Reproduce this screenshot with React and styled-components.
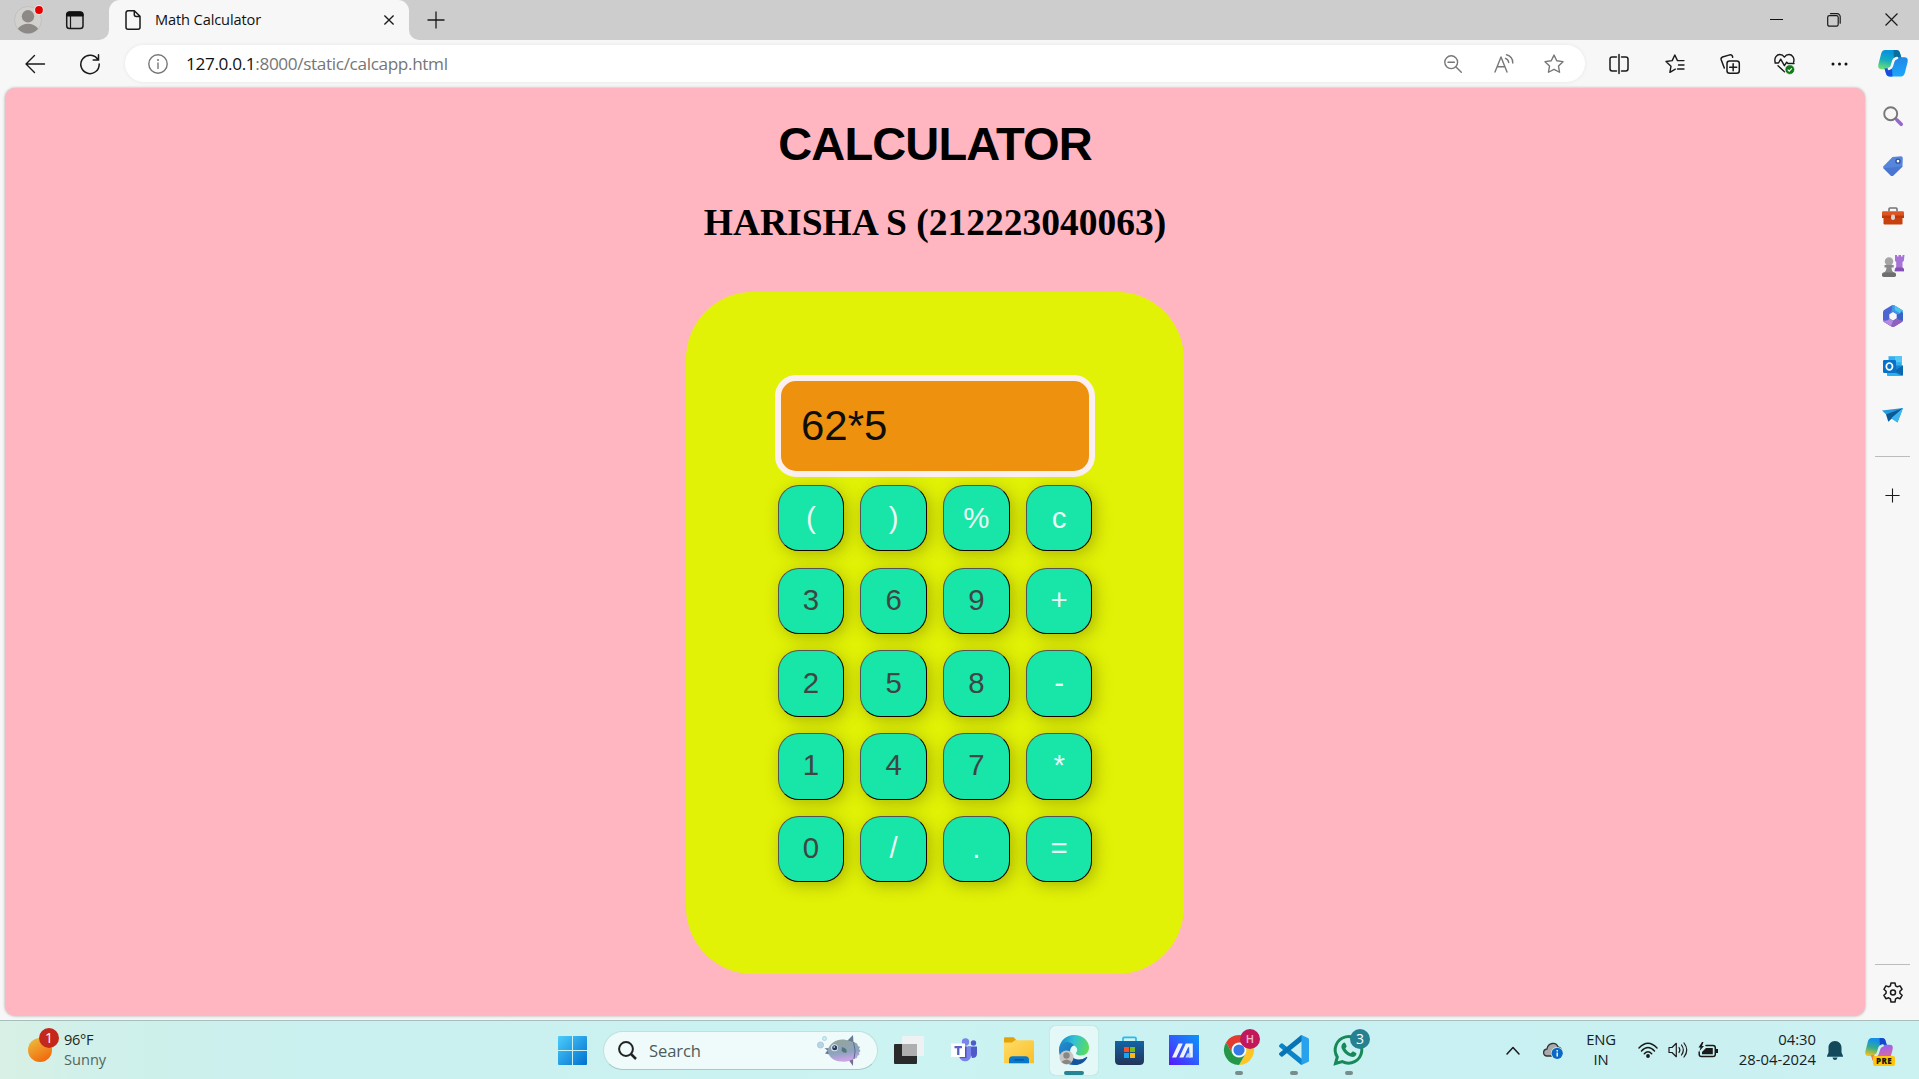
import React from "react";
import styled, { createGlobalStyle } from "styled-components";

const UI_FONT = '"Open Sans", "Noto Sans", sans-serif';

const GlobalStyle = createGlobalStyle`
  *, *::before, *::after { box-sizing: border-box; }
  body { margin: 0; overflow: hidden; background: #f7f7f7; font-family: ${UI_FONT}; }
  button, input { font: inherit; padding: 0; margin: 0; }
`;

const Screen = styled.div`
  display: flex;
  flex-direction: column;
  width: 1919px;
  height: 1079px;
  background: #f7f7f7;
`;

const Glyph = styled.svg`
  display: block;
  flex: none;
  width: ${(p) => p.$w || 20}px;
  height: ${(p) => p.$h || p.$w || 20}px;
  fill: none;
  overflow: visible;
`;

const Cell = styled.div`
  position: relative;
  display: flex;
  flex: none;
  align-items: center;
  justify-content: center;
  width: ${(p) => p.$w}px;
  height: ${(p) => (p.$h ? `${p.$h}px` : "100%")};
`;

/* ---------- Tab strip ---------- */

const TabStrip = styled.header`
  display: flex;
  height: 40px;
  flex: none;
`;

const StripStart = styled.div`
  display: flex;
  align-items: flex-start;
  width: 109px;
  padding: 6px 0 0 14px;
  gap: 23px;
  background: #cdcdcd;
  border-bottom-right-radius: 10px;
`;

const TabHolder = styled.div`
  width: 300px;
  background: #cdcdcd;
`;

const Tab = styled.div`
  display: flex;
  align-items: center;
  height: 40px;
  padding: 0 15px 1px 16px;
  background: #f7f7f7;
  border-radius: 11px 11px 0 0;
`;

const TabTitle = styled.span`
  flex: 1;
  margin-left: 14px;
  padding-bottom: 1px;
  font-size: 14.6px;
  line-height: 20px;
  letter-spacing: -0.12px;
  color: #111;
`;

const StripRest = styled.div`
  display: flex;
  flex: 1;
  justify-content: space-between;
  padding: 0 0 1px 13px;
  background: #cdcdcd;
  border-bottom-left-radius: 10px;
`;

const WindowControls = styled.div`
  display: flex;
`;

/* ---------- Toolbar ---------- */

const Toolbar = styled.nav`
  display: flex;
  align-items: center;
  flex: none;
  height: 48px;
  padding: 0 0 1px 7px;
`;

const AddressBar = styled.div`
  display: flex;
  align-items: center;
  width: 1460px;
  height: 37px;
  margin: 0 6px 0 8px;
  padding: 0 6px 0 22.5px;
  background: #fff;
  border-radius: 19px;
  box-shadow: 0 0 4px rgba(0, 0, 0, 0.07);
`;

const Url = styled.span`
  flex: 1;
  margin-left: 18.5px;
  padding-bottom: 1px;
  font-size: 17.2px;
  letter-spacing: -0.36px;
  color: #767676;
`;

const Host = styled.span`
  color: #111;
`;

/* ---------- Browser body ---------- */

const Body = styled.div`
  display: flex;
  flex: none;
  height: 932px;
  padding-left: 5px;
`;

const Page = styled.main`
  display: flex;
  flex-direction: column;
  align-items: center;
  width: 1860px;
  height: 928px;
  background: #ffb6c1;
  border-radius: 10px;
  box-shadow: 0 0 3px rgba(0, 0, 0, 0.32);
`;

const Title = styled.h1`
  margin: 29px 0 0;
  font: bold 47px/54px "Liberation Sans", Arial, sans-serif;
  letter-spacing: -0.85px;
  color: #000;
`;

const Student = styled.h2`
  margin: 30px 0 0;
  font: bold 37.5px/44px "Liberation Serif", "Times New Roman", serif;
  color: #000;
`;

const Calculator = styled.section`
  display: flex;
  flex-direction: column;
  align-items: center;
  width: 498px;
  height: 682px;
  margin-top: 47px;
  padding-top: 83px;
  background: #e1f206;
  border-radius: 67px;
`;

const Display = styled.output`
  display: flex;
  align-items: center;
  width: 320px;
  height: 102px;
  padding: 0 20px;
  color: #0e0e0a;
  background: #ee910f;
  border: 6px solid #fceff0;
  border-radius: 21px;
  font: 42px/48px "Liberation Sans", Arial, sans-serif;
`;

const Keypad = styled.div`
  display: grid;
  grid-template-columns: repeat(4, 66.4px);
  grid-auto-rows: 66.4px;
  gap: 16.35px;
  margin-top: 8px;
`;

const Key = styled.button`
  display: flex;
  align-items: center;
  justify-content: center;
  padding-bottom: ${(p) => (p.$first ? 0 : 2)}px;
  color: ${(p) => (p.$digit ? "#3e4542" : "#eaf6f2")};
  background: #18e5a8;
  border: 1px outset #000;
  border-radius: 20.8px;
  box-shadow: 3.3px 3.3px 16px rgba(92, 92, 0, 0.4);
  font: 29.4px/34px "Liberation Sans", Arial, sans-serif;
`;

const Sidebar = styled.aside`
  display: flex;
  flex-direction: column;
  align-items: center;
  width: 54px;
  padding: 2.5px 0 0 1px;
`;

const Rule = styled.div`
  flex: none;
  width: 35px;
  height: 1px;
  background: #bcbcbc;
  margin: ${(p) => p.$m || 0};
`;

const Spacer = styled.div`
  flex: 1;
`;

/* ---------- Taskbar ---------- */

const Taskbar = styled.footer`
  display: flex;
  align-items: center;
  flex: none;
  height: 59px;
  border-top: 1px solid #a6bfbd;
  background: linear-gradient(90deg, #d9f0e5 0, #d0f0ea 90px, #caf0ef 300px, #cbf3f1 900px, #c9f0f2 1450px, #cbf1f1 100%);
`;

const Weather = styled.div`
  display: flex;
  width: 548px;
  height: 58px;
  padding-left: 28px;
`;

const WeatherText = styled.div`
  display: flex;
  flex-direction: column;
  margin: 8px 0 0 3px;
  font-size: 14.6px;
  line-height: 20px;
  letter-spacing: -0.35px;
  color: #1b2624;
`;

const Muted = styled.span`
  color: #53655f;
  letter-spacing: 0;
`;

const SearchBox = styled.div`
  display: flex;
  align-items: center;
  width: 275px;
  height: 39px;
  margin: 0 7px 0 6px;
  padding: 0 16px 0 14px;
  background: #effbfb;
  border: 1px solid #bfe0de;
  border-bottom-color: #a3c9c8;
  border-radius: 20px;
`;

const SearchLabel = styled.span`
  flex: 1;
  margin-left: 12px;
  font-size: 16.6px;
  letter-spacing: -0.1px;
  color: #4c5c5b;
`;

const Apps = styled.div`
  display: flex;
  gap: 7px;
`;

const AppSlot = styled.div`
  position: relative;
  display: flex;
  align-items: center;
  justify-content: center;
  width: 48px;
  height: 49px;
  border-radius: 5px;
  background: ${(p) => (p.$active ? "#e5f8f8" : "transparent")};
  box-shadow: ${(p) => (p.$active ? "0 0 1px rgba(80,130,130,.5)" : "none")};
`;

const Indicator = styled.i`
  position: absolute;
  bottom: 0;
  left: 50%;
  width: ${(p) => (p.$active ? 20 : 8)}px;
  height: 4px;
  border-radius: 2px;
  transform: translateX(-50%);
  background: ${(p) => (p.$active ? "#258493" : "#778d8c")};
`;

const Badge = styled.b`
  position: absolute;
  top: ${(p) => p.$top}px;
  right: ${(p) => p.$right}px;
  width: 20px;
  height: 20px;
  border-radius: 50%;
  background: ${(p) => p.$bg};
  color: ${(p) => p.$fg || "#fff"};
  font: ${(p) => p.$weight || 500} ${(p) => p.$size || 14}px/20px ${UI_FONT};
  text-align: center;
`;

const Tray = styled.div`
  display: flex;
  align-items: center;
  height: 58px;
  margin-left: auto;
  padding-right: 16px;
`;

const TrayText = styled.div`
  width: ${(p) => p.$w}px;
  padding-bottom: 2px;
  text-align: ${(p) => p.$align};
  font-size: 14.8px;
  line-height: 20px;
  letter-spacing: ${(p) => p.$track}px;
  color: #17211f;
`;

/* ---------- Drawings ---------- */

const line = { stroke: "#1a1a1a", strokeWidth: 1.5, strokeLinecap: "round", strokeLinejoin: "round" };
const soft = { ...line, stroke: "#777", strokeWidth: 1.4 };

const Avatar = () => (
  <Glyph $w={28} viewBox="0 0 28 28">
    <circle cx="14" cy="14" r="13.5" fill="#d3d1ce" stroke="#bfbdba" strokeWidth=".8" />
    <circle cx="14" cy="10.3" r="6.2" fill="#8d8986" />
    <path d="M3.800 22.800C6.500 19 10 17.700 14 17.700s7.500 1.300 10.200 5.100A13.500 13.500 0 0 1 3.800 22.800Z" fill="#8d8986" />
    <circle cx="25" cy="4" r="4.900" fill="#e8e5e3" />
    <circle cx="25" cy="4" r="3.900" fill="#e80000" />
  </Glyph>
);

const TabActions = () => (
  <Glyph $w={20} $h={29} viewBox="0 0 20 29">
    <rect x="1.700" y="6" width="16.300" height="16.500" rx="2.800" {...line} />
    <path d="M1.700 10V8.500Q1.700 6 4.500 6h10.500q3 0 3 2.500V10Z" fill="#111" stroke="#111" />
    <path d="M5.500 10v12" {...line} strokeWidth="1.200" />
  </Glyph>
);

const PageIcon = () => (
  <Glyph $w={16} $h={20} viewBox="0 0 16 20">
    <path d="M3 .8h6.300L15 6.300v10.900a2 2 0 0 1-2 2H3a2 2 0 0 1-2-2V2.800a2 2 0 0 1 2-2ZM9.300.8v3.700a2 2 0 0 0 2 2H15" {...line} />
  </Glyph>
);

const Cross = ({ s = 10, w = 1.6 }) => (
  <Glyph $w={s} viewBox="0 0 12 12">
    <path d="M.5.5l11 11M11.500.5l-11 11" {...line} strokeWidth={w} strokeLinecap="butt" />
  </Glyph>
);

const Plus = ({ s }) => (
  <Glyph $w={s} viewBox="0 0 18 18">
    <path d="M9 .5v17M.5 9h17" {...line} strokeLinecap="butt" strokeWidth="1.300" />
  </Glyph>
);

const Restore = () => (
  <Glyph $w={14} viewBox="0 0 14 14">
    <rect x=".7" y="2.700" width="10.500" height="10.500" rx="1.700" {...line} strokeWidth="1.200" />
    <path d="M3.500.7h6.700a3 3 0 0 1 3 3v6.500" {...line} strokeWidth="1.200" />
  </Glyph>
);

const Back = () => (
  <Glyph viewBox="0 0 20 20">
    <path d="M9.500 1.500 1 10l8.500 8.500M1 10h18.500" {...line} strokeWidth="1.400" />
  </Glyph>
);

const Refresh = () => (
  <Glyph viewBox="0 0 20 20">
    <path d="M18.100 6A9.200 9.200 0 1 0 19.200 10M18.500.8V6h-5.300" {...line} strokeLinejoin="miter" />
  </Glyph>
);

const Info = () => (
  <Glyph viewBox="0 0 20 20">
    <circle cx="10" cy="10" r="9.200" {...soft} />
    <path d="M10 9v5.500" {...soft} />
    <circle cx="10" cy="6" r="1" fill="#777" />
  </Glyph>
);

const ZoomOut = () => (
  <Glyph $w={18} viewBox="0 0 18 18">
    <circle cx="7.200" cy="7.200" r="6.400" {...soft} />
    <path d="M4 7.200h6.400M12 12l5.300 5.300" {...soft} />
  </Glyph>
);

const ReadAloud = () => (
  <Glyph viewBox="0 0 20 20">
    <path d="M1 18 7 3l6 15M3.300 12.700h7.500M11.500 4.300a5 5 0 0 1 3.200 4.200M12.500.8A8.500 8.500 0 0 1 18.800 9" {...soft} />
  </Glyph>
);

const starPath = "M10 1.100l2.750 5.650 6.250.9-4.500 4.400 1.050 6.200L10 15.300l-5.550 2.950 1.050-6.200L1 7.650l6.250-.9Z";

const Star = () => (
  <Glyph viewBox="0 0 20 20">
    <path d={starPath} {...soft} />
  </Glyph>
);

const Split = () => (
  <Glyph viewBox="0 0 20 20">
    <path d="M7.500 3H3.200Q1 3 1 5.200v9.600Q1 17 3.200 17h4.300M12.500 3h4.300Q19 3 19 5.200v9.600q0 2.200-2.200 2.200h-4.300M10 .5v19" {...line} />
  </Glyph>
);

const Favorites = () => (
  <Glyph viewBox="0 0 20 20">
    <path d="M10.300 15.200 4.900 18.300l1.100-6.100L1 7.500l6.200-.9L9.800 1l2.700 5.600H19M13.500 11H19M12.500 15H19" {...line} strokeWidth="1.400" />
  </Glyph>
);

const Collections = () => (
  <Glyph viewBox="0 0 20 20">
    <rect x="7" y="7" width="12.300" height="12.300" rx="2.500" {...line} />
    <path d="M13.150 9.700v7M9.700 13.150h7M4.300 14 1.200 5.800Q.6 3.800 2.500 3L9.700.9q2-.5 2.700 1.200l.3 1.100" {...line} />
  </Glyph>
);

const Essentials = () => (
  <Glyph $w={21} viewBox="0 0 21 21">
    <path d="M1.200 9.200C-.2 4.500 3 1.500 5.800 1.500c2.200 0 3.700 1.200 4.600 2.600.9-1.400 2.400-2.600 4.600-2.600 2.800 0 6 3 4.600 7.700M1 10h3.500l2.200-3.800 3.700 6.500 2.300-3.500 1.300 1.300h6M4 12.800l6.500 6" {...line} strokeWidth="1.400" />
    <circle cx="15.800" cy="16.600" r="4.800" fill="#117a16" stroke="#f7f7f7" strokeWidth=".7" />
    <path d="m13.700 16.700 1.500 1.500 2.600-2.900" stroke="#fff" strokeWidth="1.100" />
  </Glyph>
);

const Dots = () => (
  <Glyph $w={17} $h={4} viewBox="0 0 17 4">
    {[2, 8.5, 15].map((x) => <circle key={x} cx={x} cy="2" r="1.500" fill="#111" />)}
  </Glyph>
);

const RIBBON = "M7 0H18.300q2.900 0 3.700 3l1.500 5H20q-3.700 0-4.800 3.600L13.300 16.300q-1 3-4.300 3H3.600Q-.6 19.300.3 14.500L3 4Q4 0 7 0Z";

const Copilot = ({ id, w, colors, gap }) => (
  <Glyph $w={w} $h={w * 0.88} viewBox="0 0 30 26.500">
    <defs>
      <linearGradient id={`${id}a`} x1=".5" y1="0" x2=".25" y2="1">
        <stop stopColor={colors[0]} offset=".15" /><stop offset=".55" stopColor={colors[1]} /><stop offset="1" stopColor={colors[2]} />
      </linearGradient>
      <linearGradient id={`${id}b`} x1=".3" y1="0" x2=".5" y2="1">
        <stop stopColor={colors[4]} /><stop offset="1" stopColor={colors[3]} />
      </linearGradient>
    </defs>
    <path d={RIBBON} fill={`url(#${id}a)`} />
    <path d="M15.500 0h2.800q2.900 0 3.700 3l1.500 5H20q-2.500 0-3.900 1.800Z" fill={colors[5]} />
    <g transform="rotate(180 15 13.250)">
      <path d={RIBBON} fill={`url(#${id}b)`} />
      <path d="M15.500 0h2.800q2.900 0 3.700 3l1.500 5H20q-2.500 0-3.900 1.800Z" fill={colors[6]} />
    </g>
    <path d="M19 8q-2.800.4-3.700 3.200l-1.600 5.200q-.7 2-2.700 2.500" stroke={gap} strokeWidth="2.600" strokeLinecap="round" />
  </Glyph>
);

const SideSearch = () => (
  <Glyph viewBox="0 0 20 20">
    <circle cx="7.700" cy="7.700" r="6.500" stroke="#777" strokeWidth="1.900" />
    <path d="m12.200 12.200 2 2" stroke="#777" strokeWidth="2" />
    <path d="m14.200 14.200 4 4" stroke="#9866cf" strokeWidth="3.700" strokeLinecap="round" />
  </Glyph>
);

const Tag = () => (
  <Glyph viewBox="0 0 20 20">
    <path d="M9.500 1 18 .2q1.700 0 1.800 1.800l-.3 8.500L10 19.700q-1 .7-2 0L.5 12.200q-.8-1 0-2Z" fill="#5685dc" />
    <path d="m.5 12.200 7.500 7.500q1 .7 2 0l9.500-9.200Z" fill="#4a75d0" />
    <circle cx="15" cy="5.200" r="2" fill="#fff" stroke="#304f9e" strokeWidth="1.300" />
  </Glyph>
);

const Toolbox = () => (
  <Glyph $w={22} $h={18} viewBox="0 0 22 18">
    <path d="M7 4.500V2q0-1 1-1h6q1 0 1 1v2.500" stroke="#747474" strokeWidth="1.600" />
    <path d="M0 5.500Q0 4.300 1.200 4.300h19.600q1.200 0 1.200 1.200v5H0Z" fill="#df5522" />
    <path d="M1.500 9.500h19v6.800q0 1.200-1.200 1.200H2.700q-1.200 0-1.200-1.200Z" fill="#c8400f" />
    <path d="M0 8.500h22V11H0Z" fill="#bc3908" />
    <rect x="9" y="7.500" width="4" height="5.500" rx="2" fill="#d9d4d0" />
  </Glyph>
);

const Games = () => (
  <Glyph $w={22} viewBox="0 0 22 22">
    <path d="M13 0h2v1.500h1.500V0H19v1.500h1.500V0h2l-.7 6-1.300 1v5.500l1.500 1.500v2.300h-9.300V14l1.500-1.500V7L13 6Z" fill="#a873d8" />
    <path d="M13.700 12.500h6.800L22 14v2.300h-9.300Z" fill="#8350b6" />
    <circle cx="7" cy="6.500" r="4.200" fill="#a5a5a5" />
    <path d="M2.500 10h9.200v2.500H9.500q0 4 3 5.500h-11q3-2 3-5.500h-2Z" fill="#898989" />
    <rect y="17.500" width="14" height="4.500" rx="1.700" fill="#6f6f6f" />
  </Glyph>
);

const M365 = () => (
  <Glyph $w={20} $h={22} viewBox="0 0 20 22">
    <path d="M8.500.6q1.500-.9 3 0L18.500 4.700Q20 5.600 20 7.300v7.400q0 1.700-1.500 2.600l-7 4.100q-1.500.9-3 0l-7-4.100Q0 16.400 0 14.700V7.300q0-1.700 1.500-2.600Z" fill="#4b66d3" />
    <path d="M8.500.6q1.500-.9 3 0L18.500 4.700Q20 5.600 20 7.300v7.400L14 12V9l-4-2.500-3 1.700Q10.500 4.500 8.500.6Z" fill="#3a9be6" />
    <path d="M11.500.6 18.500 4.700Q20 5.600 20 7.300v3L12 5Z" fill="#4fc4ee" />
    <path d="M20 14.700q0 1.700-1.500 2.600l-7 4.100q-1.500.9-3 0l-7-4.100Q.3 16.500.1 15.300q4 1.500 6.400-1.500L10 16l4-2.500V9Q20 9 20 14.700Z" fill="#8f62c0" />
    <path d="M.1 15.300q4 1.500 6.400-1.500L10 16l-2 5L1.500 17.300Q.3 16.500.1 15.300Z" fill="#b68ade" />
    <path d="M14 9.200Q17.500 10 18 6l2 2v6.700q-1 2.300-6-1.200Z" fill="#3b62c9" />
    <path d="m10 7 3.700 2.200v4L10 15.400l-3.700-2.200v-4Z" fill="#f7f7f7" />
  </Glyph>
);

const Outlook = () => (
  <Glyph viewBox="0 0 20 20">
    <path d="M5.500.2h13.300v11H5.500Z" fill="#32b0ee" />
    <path d="M12 .2h6.800v6H12Z" fill="#54c8f5" />
    <path d="M4 9.500h16v9.200q0 1.100-1.100 1.100H5q-1 0-1-1Z" fill="#1686d0" />
    <path d="m20 9.500-9 5.500 8.500 4.500q.5-.3.500-1Z" fill="#0d67ad" />
    <path d="m4 14 8.500 3 6 2.800H5q-1 0-1-1Z" fill="#2bb2ee" />
    <rect y="4" width="13" height="13" rx="1.300" fill="#0872ca" />
    <ellipse cx="6.400" cy="10.400" rx="3.100" ry="3.400" stroke="#fff" strokeWidth="1.700" />
  </Glyph>
);

const Drop = () => (
  <Glyph $w={21} $h={15} viewBox="0 0 21 15">
    <path d="M0 2.500 21 0 6 8.300Z" fill="#2898df" />
    <path d="m6 8.300 15-8.300-5.500 14.500Z" fill="#22a4ea" />
    <path d="M4 6.500 21 0 6.300 13.800Z" fill="#0b5a96" />
    <path d="m9.500 10 11.500-10-5.500 14.500Z" fill="#3db4ee" />
  </Glyph>
);

const Gear = () => (
  <Glyph $w={20} $h={21} viewBox="0 0 20 21">
    <path d="M8 .9h4l.6 2.900 1.700 1 2.800-.9 2 3.400-2.200 2v2l2.200 2-2 3.400-2.800-.9-1.700 1-.6 3.200H8l-.6-3.200-1.700-1-2.800.9-2-3.400 2.200-2v-2l-2.200-2 2-3.400 2.800.9 1.700-1Z" {...line} />
    <circle cx="10" cy="10.400" r="2.500" {...line} />
  </Glyph>
);

const Sun = () => (
  <Glyph $w={33} $h={24} viewBox="0 0 33 24">
    <defs><linearGradient id="sun" x1=".15" y1="0" x2=".7" y2="1"><stop stopColor="#e9bb39" /><stop offset=".15" stopColor="#eeb035" /><stop offset="1" stopColor="#f2660b" /></linearGradient></defs>
    <circle cx="12" cy="12" r="12" fill="url(#sun)" />
  </Glyph>
);

const Windows = () => (
  <Glyph $w={29} viewBox="0 0 29 29">
    <defs><linearGradient id="win" gradientUnits="userSpaceOnUse" x1="0" y1="0" x2="29" y2="29"><stop stopColor="#4ccdfb" /><stop offset="1" stopColor="#0070cf" /></linearGradient></defs>
    <path d="M1 0h13v14H0V1Q0 0 1 0ZM15 0h13q1 0 1 1v13H15ZM0 15h14v14H1q-1 0-1-1ZM15 15h14v13q0 1-1 1H15Z" fill="url(#win)" />
  </Glyph>
);

const SearchGlass = () => (
  <Glyph $w={19} viewBox="0 0 19 19">
    <circle cx="8" cy="8" r="6.900" stroke="#222" strokeWidth="2" />
    <path d="m13 13 5 5" stroke="#222" strokeWidth="2.500" />
  </Glyph>
);

const Fish = () => (
  <Glyph $w={44} $h={31} viewBox="0 0 44 31">
    <defs><linearGradient id="fish" x1="0" y1="0" x2=".2" y2="1"><stop stopColor="#93a597" /><stop offset=".65" stopColor="#8da3bf" /><stop offset="1" stopColor="#cba3e6" /></linearGradient></defs>
    <circle cx="3.500" cy="10" r="3" fill="#a6dfe2" stroke="#c7b8e6" /><circle cx="7.500" cy="3.500" r="2" fill="#cbedf0" stroke="#9ed2d8" strokeWidth=".8" />
    <path d="M30 6 36 0l.5 8Z" fill="#687b96" /><path d="m31 24 5 7 .2-8Z" fill="#776d92" />
    <path d="m7.500 13 3 2.500-2.500 3 5 1v-6Z" fill="#667493" />
    <path d="M10.500 15.500C13 8 19 4.500 25 4.500c6 0 9 2.500 12 2.500l3 1.500 1 2.500 2 1-1 2 1.500 1.700-1.500 2 .5 2-2 1-.5 2.300-2.500.5C34 26 29 27 24 26.500 16 26 12 22 10.500 15.500Z" fill="url(#fish)" />
    <path d="M36.500 7q3 9 .5 17" stroke="#5c6d93" strokeWidth="1" />
    <path d="M25 12q6 1.500 4.500 5.500-3 1-5-2Z" fill="#56757a" />
    <circle cx="17.500" cy="12.800" r="3.500" fill="#d8e9ed" /><circle cx="17.700" cy="12.800" r="2.500" fill="#253b62" /><circle cx="17.200" cy="12" r=".8" fill="#fff" />
  </Glyph>
);

const TaskView = () => (
  <Glyph $w={30} $h={28} viewBox="0 0 30 28">
    <rect y="8" width="23" height="20" rx="1" fill="#292b2a" />
    <rect x="8" width="22" height="20" rx="1" fill="#eef2f2" />
    <path d="M8 8h15v12H8Z" fill="#aeb0b0" />
  </Glyph>
);

const Teams = () => (
  <Glyph $w={26} $h={24} viewBox="0 0 26 24">
    <circle cx="14.500" cy="4" r="3.700" fill="#7b83eb" /><circle cx="22.500" cy="5" r="2.700" fill="#5059c9" />
    <path d="M17 8.500h9v7q0 4.500-5 4.500Z" fill="#5059c9" />
    <path d="M8 8.500h12v9c0 7-10.500 8-12 1Z" fill="#7b83eb" />
    <path d="M9 19h5V8.500h1.500V20H9Z" fill="#4d55ba" />
    <path d="M0 5.500h14V19H0Z" fill="#fff" />
    <path d="M3.500 8h7.500v2.200H8.400v6.800H6.100v-6.800H3.500Z" fill="#5b62c4" />
  </Glyph>
);

const Explorer = () => (
  <Glyph $w={30} $h={27} viewBox="0 0 30 27">
    <defs><linearGradient id="folder" x1="0" y1="0" x2="1" y2="1"><stop stopColor="#ffdc69" /><stop offset="1" stopColor="#f9bf25" /></linearGradient></defs>
    <path d="M0 1.500Q0 .3 1.200.3h8.500l2.800 3V7H0Z" fill="#e2a20a" />
    <path d="M0 5.500h8l3-2.200h17.500Q30 3.300 30 5v21.300H0Z" fill="url(#folder)" />
    <path d="M5 26.300v-3.500q0-3.500 3.500-3.500h13q3.500 0 3.500 3.500v3.500Z" fill="#0878cc" />
    <path d="M10.500 22.800h9.300" stroke="#064d85" strokeWidth="1.300" />
  </Glyph>
);

const Edge = () => (
  <Glyph $w={30} viewBox="0 0 30 30">
    <defs>
      <linearGradient id="edgeTop" x1="0" y1=".4" x2="1" y2=".6"><stop stopColor="#1686ca" /><stop offset=".45" stopColor="#30c2d5" /><stop offset="1" stopColor="#5ddd55" /></linearGradient>
      <linearGradient id="edgeBody" x1="0" y1="0" x2="1" y2="1"><stop stopColor="#258ecd" /><stop offset="1" stopColor="#0d62b5" /></linearGradient>
    </defs>
    <path d="M0 14C1 5.500 7.500 0 15 0c9 0 15 6 15 12.500 0 5-3.500 8-8 8-3.500 0-6-1.500-4.700-3 2.700-3-.3-7.500-5.300-7.500C6.500 10 2 12 0 14Z" fill="url(#edgeTop)" />
    <path d="M0 14.500C1 9 6 6 10.500 7.500c3 1 4.500 2.800 4.500 2.800-4 1.500-5 6.200-2.500 11.200 1.700 3.500 6.500 7 11 5.500C20 29.500 17 30 15 30 6 30-.5 23 0 14.500Z" fill="url(#edgeBody)" />
    <path d="M12 20.500c3 4.500 9.500 5.500 15.500 1.500.6-.4 1 .1.700.7C25.500 27.500 21 30 16 30c-4 0-6-4-4-9.500Z" fill="#14569c" />
    <circle cx="7.500" cy="22.500" r="7" fill="#c8c6c2" /><circle cx="7.500" cy="20.500" r="3.200" fill="#898784" />
    <path d="M2.500 27q5-5 10 0-4.500 4.500-10 0Z" fill="#898784" />
  </Glyph>
);

const Store = () => (
  <Glyph $w={29} viewBox="0 0 29 29">
    <defs><linearGradient id="store" x1="0" y1="0" x2="0" y2="1"><stop stopColor="#1364a6" /><stop offset="1" stopColor="#233359" /></linearGradient></defs>
    <path d="M8 6V2.700q0-1.300 1.300-1.300h10.400Q21 1.400 21 2.700V6" stroke="#22bdf0" strokeWidth="1.700" />
    <path d="M0 5h29v19.500q0 4.500-4.500 4.500h-20Q0 29 0 24.500Z" fill="url(#store)" />
    <path d="M9 11h5v5H9Z" fill="#f3512a" /><path d="M15 11h5v5h-5Z" fill="#7bbb1b" /><path d="M9 17h5v5H9Z" fill="#18a4ef" /><path d="M15 17h5v5h-5Z" fill="#fbb813" />
  </Glyph>
);

const MyAsus = () => (
  <Glyph $w={30} viewBox="0 0 30 30">
    <defs><linearGradient id="asus" x1="0" y1="1" x2="1" y2="0"><stop stopColor="#5a16fb" /><stop offset=".5" stopColor="#2f5dff" /><stop offset="1" stopColor="#0897f6" /></linearGradient></defs>
    <path d="M0 0h30v30H0Z" fill="url(#asus)" />
    <path d="m3 22.500 6.500-14h4.300l-6.500 14ZM10.300 22.500l6.500-14h7v14h-3.600V12.200h-1.100l-4.700 10.300Z" fill="#f0f3fc" />
    <path d="m16.300 22.500 2.200-4.300h3v4.300Z" fill="#b9cdf6" />
  </Glyph>
);

const Chrome = () => (
  <Glyph $w={30} viewBox="0 0 30 30">
    <path d="M2 7.500A15 15 0 0 1 28 7.500H15a7.500 7.500 0 0 0-6.500 11.200Z" fill="#e33b2e" />
    <path d="M28 7.500A15 15 0 0 1 15 30l6.500-11.300A7.500 7.500 0 0 0 15 7.500Z" fill="#fcc528" />
    <path d="M15 30A15 15 0 0 1 2 7.500l6.500 11.200a7.500 7.500 0 0 0 13 0Z" fill="#259749" />
    <circle cx="15" cy="15" r="7" fill="#fff" /><circle cx="15" cy="15" r="5.600" fill="#3579e8" />
  </Glyph>
);

const VSCode = () => (
  <Glyph $w={30} viewBox="0 0 30 30">
    <path d="M0 10.500 2 8.600q.8-.6 1.600 0L25 25.500 22.500 30Q22 30 21 29L.4 12Q-.2 11.300 0 10.500Z" fill="#0b83c9" />
    <path d="M0 19.500 2 21.400q.8.600 1.600 0L25 4.500 22.500 0Q22 0 21 1L.4 18q-.6.800-.4 1.500Z" fill="#0873b5" />
    <path d="M22.500 0 29 3q1 .5 1 1.600v20.800q0 1.100-1 1.600l-6.500 3V0Z" fill="#28a2ec" />
  </Glyph>
);

const WhatsApp = () => (
  <Glyph $w={30} viewBox="0 0 30 30">
    <path d="M1.500 28.500 3.300 22A13.300 13.300 0 1 1 8.300 26.600Z" stroke="#178858" strokeWidth="3" />
    <path d="M9 8.200c.8-.9 2-.8 2.500.3l1 2.200c.3.700.1 1.100-1.200 2.600 1.300 2.500 3 4 5.500 5 1.500-2 1.900-2 2.600-1.700l2.300 1.100c1 .5.900 1.200.4 2.400-1 2-3.600 2.300-5.700 1.500-4-1.500-6.900-4.200-8.700-8.100-.8-1.900-.1-4 1.300-5.300Z" fill="#178858" />
  </Glyph>
);

const Chevron = () => (
  <Glyph $w={14} $h={9} viewBox="0 0 14 9"><path d="m1 8 6-6.500L13 8" {...line} /></Glyph>
);

const Cloud = () => (
  <Glyph $w={20} $h={17} viewBox="0 0 20 17">
    <path d="M4 14C-.5 14-.5 7.500 4 7 5 .5 13-.5 15 5c5 1 4 8-1 9Z" fill="#aaa" stroke="#333" strokeWidth="1.300" />
    <circle cx="14.200" cy="11.300" r="6.300" fill="#c9f0f2" /><circle cx="14.200" cy="11.300" r="5.600" fill="#0969c3" /><path d="M14.200 10.500v4M14.200 8v1.400" stroke="#fff" strokeWidth="1.400" />
  </Glyph>
);

const Wifi = () => (
  <Glyph $w={20} $h={16} viewBox="0 0 20 16">
    <path d="M1 6q9-9.500 18 0M3.500 9q6.500-7 13 0M6.300 11.700q3.700-3.800 7.400 0" {...line} />
    <circle cx="10" cy="14" r="1.900" fill="#1a1a1a" />
  </Glyph>
);

const Speaker = () => (
  <Glyph $w={20} $h={16} viewBox="0 0 20 16">
    <path d="M1 5.500h3L8.300 1.300v13.400L4 10.500H1ZM11 5.500q1.700 2.500 0 5M13.500 3q3.700 5 0 10M16 1q5.500 7 0 14" {...line} strokeWidth="1.200" />
  </Glyph>
);

const Battery = () => (
  <Glyph $w={20} $h={16} viewBox="0 0 20 16">
    <path d="M8 3.500h7q2.300 0 2.300 2.300v6.400q0 2.300-2.300 2.300H3.500q-2.300 0-2.300-2.300V10" {...line} />
    <path d="M8 6h6.800v6.300H4V10Z" fill="#1a1a1a" /><path d="M18 7h2v4h-2Z" fill="#1a1a1a" />
    <path d="M4 0 .5 5.500h2L1.500 9 6 4H4L5.500 0Z" fill="#1a1a1a" />
  </Glyph>
);

const Bell = () => (
  <Glyph $w={16} $h={19} viewBox="0 0 16 19">
    <path d="M8 0c4 0 6.500 3 6.500 6.500v5L16 15v.7H0V15l1.500-3.500v-5C1.500 3 4 0 8 0ZM5.500 16.500h5Q10 19 8 19t-2.500-2.500Z" fill="#13495a" />
  </Glyph>
);

const PreTag = styled.span`
  position: absolute;
  right: 8px;
  bottom: 13px;
  width: 22px;
  height: 10px;
  border-radius: 2px;
  background: #ffc70b;
  color: #17160d;
  font: 800 8px/10px ${UI_FONT};
  letter-spacing: 0.4px;
  text-align: center;
`;

const KEYS = ["(", ")", "%", "c", "3", "6", "9", "+", "2", "5", "8", "-", "1", "4", "7", "*", "0", "/", ".", "="];
const SIDE = [SideSearch, Tag, Toolbox, Games, M365, Outlook, Drop];
const BLUE = ["#0796dc", "#19aebd", "#70df70", "#2385e4", "#1ba8fb", "#0a6d9c", "#174ede"];
const RAINBOW = ["#1590e6", "#35ad8d", "#f5c31d", "#9861f2", "#f36c83", "#1547cf", "#f48637"];

const APPS = [
  { Icon: TaskView },
  { Icon: Teams },
  { Icon: Explorer },
  { Icon: Edge, active: true, open: true },
  { Icon: Store },
  { Icon: MyAsus },
  { Icon: Chrome, open: true, badge: { text: "H", bg: "#c2185b", fg: "#f0b6cc", size: 11, weight: 600 } },
  { Icon: VSCode, open: true },
  { Icon: WhatsApp, open: true, badge: { text: "3", bg: "#258191", size: 14 } },
];

export default function App() {
  return (
    <Screen>
      <GlobalStyle />
      <TabStrip>
        <StripStart><Avatar /><TabActions /></StripStart>
        <TabHolder>
          <Tab>
            <PageIcon />
            <TabTitle>Math Calculator</TabTitle>
            <Cross />
          </Tab>
        </TabHolder>
        <StripRest>
          <Cell $w={27}><Plus s={18} /></Cell>
          <WindowControls>
            <Cell $w={57}><Glyph $w={13} $h={1} viewBox="0 0 13 1"><path d="M0 0h13v1H0Z" fill="#111" /></Glyph></Cell>
            <Cell $w={58}><Restore /></Cell>
            <Cell $w={56}><Cross s={13} w={1.1} /></Cell>
          </WindowControls>
        </StripRest>
      </TabStrip>

      <Toolbar>
        <Cell $w={55}><Back /></Cell>
        <Cell $w={55}><Refresh /></Cell>
        <AddressBar>
          <Info />
          <Url><Host>127.0.0.1</Host>:8000/static/calcapp.html</Url>
          <Cell $w={50}><ZoomOut /></Cell>
          <Cell $w={51}><ReadAloud /></Cell>
          <Cell $w={50}><Star /></Cell>
        </AddressBar>
        <Cell $w={56}><Split /></Cell>
        <Cell $w={55}><Favorites /></Cell>
        <Cell $w={55}><Collections /></Cell>
        <Cell $w={55}><Essentials /></Cell>
        <Cell $w={55}><Dots /></Cell>
        <Cell $w={51}><Copilot id="top" w={30} colors={BLUE} gap="#f7f7f7" /></Cell>
      </Toolbar>

      <Body>
        <Page>
          <Title>CALCULATOR</Title>
          <Student>HARISHA S (212223040063)</Student>
          <Calculator>
            <Display>62*5</Display>
            <Keypad>
              {KEYS.map((k, i) => <Key key={k} $first={i < 4} $digit={/\d/.test(k)}>{k}</Key>)}
            </Keypad>
          </Calculator>
        </Page>
        <Sidebar>
          {SIDE.map((Icon, i) => <Cell key={i} $w={54} $h={50}><Icon /></Cell>)}
          <Rule $m="15.5px 0 15px" />
          <Cell $w={54} $h={46}><Plus s={15} /></Cell>
          <Spacer />
          <Rule />
          <Cell $w={54} $h={55}><Gear /></Cell>
        </Sidebar>
      </Body>

      <Taskbar>
        <Weather>
          <Cell $w={33}>
            <Sun />
            <Badge $top={7} $right={2} $bg="#c4281c">1</Badge>
          </Cell>
          <WeatherText><span>96°F</span><Muted>Sunny</Muted></WeatherText>
        </Weather>
        <Cell $w={49}><Windows /></Cell>
        <SearchBox><SearchGlass /><SearchLabel>Search</SearchLabel><Fish /></SearchBox>
        <Apps>
          {APPS.map(({ Icon, active, open, badge }, i) => (
            <AppSlot key={i} $active={active}>
              <Icon />
              {open && <Indicator $active={active} />}
              {badge && <Badge $top={3} $right={3} $bg={badge.bg} $fg={badge.fg} $size={badge.size} $weight={badge.weight}>{badge.text}</Badge>}
            </AppSlot>
          ))}
        </Apps>
        <Tray>
          <Cell $w={40}><Chevron /></Cell>
          <Cell $w={40}><Cloud /></Cell>
          <TrayText $w={56} $align="center" $track={-0.2}>ENG<br />IN</TrayText>
          <Cell $w={38}><Wifi /></Cell>
          <Cell $w={22}><Speaker /></Cell>
          <Cell $w={38}><Battery /></Cell>
          <TrayText $w={89} $align="right" $track={0}>04:30<br />28-04-2024</TrayText>
          <Cell $w={38}><Bell /></Cell>
          <Cell $w={49}><Copilot id="tray" w={28} colors={RAINBOW} gap="#cbf1f1" /><PreTag>PRE</PreTag></Cell>
        </Tray>
      </Taskbar>
    </Screen>
  );
}
